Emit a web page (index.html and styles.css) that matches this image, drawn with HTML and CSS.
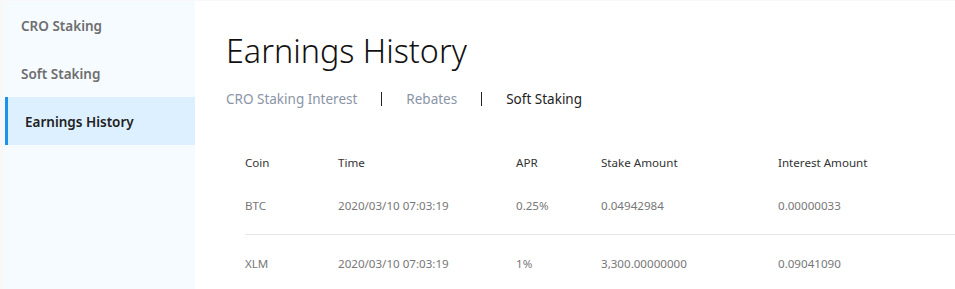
FILE: index.html
```html
<!DOCTYPE html>
<html>
<head>
<meta charset="utf-8">
<link rel="stylesheet" href="styles.css">
</head>
<body>
<div class="layout">
  <nav class="sidebar">
    <div class="nav-item">CRO Staking</div>
    <div class="nav-item">Soft Staking</div>
    <div class="nav-item active">Earnings History</div>
  </nav>
  <main class="main">
    <h1 class="title">Earnings History</h1>
    <div class="tabs">
      <span class="tab">CRO Staking Interest</span>
      <span class="sep"></span>
      <span class="tab">Rebates</span>
      <span class="sep"></span>
      <span class="tab current">Soft Staking</span>
    </div>
    <div class="table">
      <div class="row head">
        <div class="c1">Coin</div>
        <div class="c2">Time</div>
        <div class="c3">APR</div>
        <div class="c4">Stake Amount</div>
        <div class="c5">Interest Amount</div>
      </div>
      <div class="row body">
        <div class="c1">BTC</div>
        <div class="c2">2020/03/10 07:03:19</div>
        <div class="c3">0.25%</div>
        <div class="c4">0.04942984</div>
        <div class="c5">0.00000033</div>
      </div>
      <div class="row body">
        <div class="c1">XLM</div>
        <div class="c2">2020/03/10 07:03:19</div>
        <div class="c3">1%</div>
        <div class="c4">3,300.00000000</div>
        <div class="c5">0.09041090</div>
      </div>
    </div>
  </main>
</div>
</body>
</html>
```
FILE: styles.css
```css
* { box-sizing: border-box; }
html, body { margin: 0; padding: 0; }
body {
  background: #f8f8f8;
  font-family: "Noto Sans", "Noto Sans CJK KR", sans-serif;
  width: 955px;
  height: 289px;
  overflow: hidden;
}
.layout {
  display: flex;
  padding: 1px 0 0 5px;
  height: 289px;
}
.sidebar {
  width: 190px;
  flex: none;
  background: #f5fbff;
  display: flex;
  flex-direction: column;
}
.nav-item {
  height: 48px;
  display: flex;
  align-items: center;
  padding: 2px 0 0 16px;
  font-size: 13.5px;
  font-weight: 600;
  color: #6e6e6e;
}
.nav-item.active {
  background: #dcf0ff;
  border-left: 3px solid #1a93ef;
  padding-left: 17px;
  color: #222;
}
.main {
  flex: 1;
  background: #fff;
  padding: 24px 0 0 31px;
  min-width: 0;
}
.title {
  margin: 0;
  font-size: 32.3px;
  font-weight: 300;
  color: #111;
  line-height: 50px;
  letter-spacing: 0;
}
.tabs {
  display: flex;
  align-items: center;
  margin-top: 12px;
  height: 24px;
  font-size: 13.5px;
}
.tab { color: #8a94a6; }
.tab.current { color: #222; }
.sep {
  width: 1px;
  height: 14px;
  background: #222;
  margin: 0 24px;
}
.table {
  margin: 37px 0 0 19px;
  font-size: 11.6px;
}
.row {
  display: flex;
  align-items: center;
}
.row.head { height: 28px; color: #333; }
.row.body { height: 58px; color: #777; }
.row.body + .row.body { border-top: 1px solid #e8e8e8; }
.c1 { width: 93px; }
.c2 { width: 178px; }
.c3 { width: 85px; }
.c4 { width: 177px; }
.c5 { flex: 1; }
```
